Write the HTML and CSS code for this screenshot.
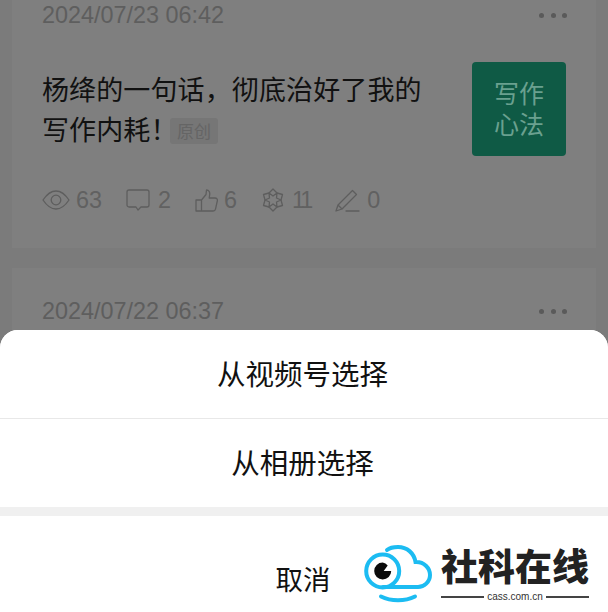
FILE: index.html
```html
<!DOCTYPE html>
<html lang="zh-CN">
<head>
<meta charset="utf-8">
<title>选择</title>
<link rel="stylesheet" href="styles.css">
</head>
<body>
<div class="page">
  <main class="feed">
    <article class="card">
      <header class="card-head">
        <time class="date">2024/07/23 06:42</time>
        <span class="dots"><i></i><i></i><i></i></span>
      </header>
      <div class="card-body">
        <h2 class="title">杨绛的一句话，彻底治好了我的写作内耗<span class="bang">！</span><span class="tag">原创</span></h2>
        <div class="thumb">写作<br>心法</div>
      </div>
      <div class="stats">
        <span class="stat">
          <svg class="icon icon-eye" viewBox="0 0 28 20"><path d="M1 10C5 4 9 1 14 1s9 3 13 9c-4 6-8 9-13 9S5 16 1 10Z"/><circle cx="14" cy="10" r="4.800"/></svg>
          <span>63</span>
        </span>
        <span class="stat">
          <svg class="icon icon-comment" viewBox="0 0 24 22"><path d="M3 1h18a2 2 0 0 1 2 2v13a2 2 0 0 1-2 2h-6l-3 3-2-3H3a2 2 0 0 1-2-2V3a2 2 0 0 1 2-2Z"/></svg>
          <span>2</span>
        </span>
        <span class="stat">
          <svg class="icon icon-like" viewBox="0 0 23 23"><path d="M1 11h5.500v11H1ZM6.500 11l4.500-5.500L11.500 1c2.500 0 3.500 2 3.200 4.500L14.200 9H20c1.800 0 2.700 1.400 2.300 3l-1.800 8.200c-.3 1.200-1.200 1.800-2.300 1.800H6.500"/></svg>
          <span>6</span>
        </span>
        <span class="stat">
          <svg class="icon icon-star" viewBox="0 0 24 24"><path d="M12 1 16 5 21.500 6.500 20 12 21.500 17.500 16 19 12 23 8 19 2.500 17.500 4 12 2.500 6.500 8 5Z"/><path d="M8 5 12 8 16 5 15.500 10 20 12 15.500 14 16 19 12 16 8 19 8.500 14 4 12 8.500 10Z"/></svg>
          <span class="tight">11</span>
        </span>
        <span class="stat">
          <svg class="icon icon-pen" viewBox="0 0 25 23"><path d="M1 22 3 16 17.500 1.500l4 4L7 20ZM3 16l4 4"/><path d="M11 22h13"/></svg>
          <span>0</span>
        </span>
      </div>
    </article>
    <article class="card">
      <header class="card-head">
        <time class="date">2024/07/22 06:37</time>
        <span class="dots"><i></i><i></i><i></i></span>
      </header>
    </article>
  </main>

  <section class="sheet">
    <button class="sheet-item">从视频号选择</button>
    <button class="sheet-item">从相册选择</button>
    <div class="sheet-gap"></div>
    <button class="sheet-cancel">取消</button>
  </section>

  <div class="logo">
    <svg class="logo-mark" viewBox="0 0 72 60">
      <path class="logo-line" d="M25 6C28 3.500 32 3 36 3c9 0 16 6 17.500 15C62 17.500 68 24 68 31c0 7-6 12-12 12H21"/>
      <circle class="logo-line" cx="20.700" cy="27" r="16.500"/>
      <path class="logo-pupil" d="M20.700 18.500a8.500 8.500 0 1 0 8.500 8.500h-7.500l4-5.500a8.500 8.500 0 0 0-5-3Z"/>
      <path class="logo-line" d="M19 52.500c10 5 24 5 34 0"/>
    </svg>
    <div class="logo-text">
      <div class="logo-name">社科在线</div>
      <div class="logo-url"><span>cass.com.cn</span></div>
    </div>
  </div>
</div>
</body>
</html>
```
FILE: styles.css
```css
* { box-sizing: border-box; }
html, body { margin: 0; padding: 0; }
body { font-family: "Liberation Sans", "Noto Sans CJK SC", sans-serif; background: #7b7b7b; }

.page { position: relative; width: 608px; height: 612px; overflow: hidden; background: #7b7b7b; }

.feed { display: flex; flex-direction: column; gap: 20px; padding: 0 12px; margin-top: -28px; }
.card { height: 276px; padding: 28px 30px 0; background: #7f7f7f; }

.card-head { display: flex; justify-content: space-between; align-items: center; height: 28px; padding-top: 2px; }
.date { font-size: 23.400px; color: #5e5e5e; }
.dots { display: flex; gap: 6.500px; margin-right: -1px; }
.dots i { display: block; width: 5px; height: 5px; border-radius: 50%; background: #5a5a5a; }

.card-body { display: flex; justify-content: space-between; align-items: center; margin-top: 34px; height: 94px; }
.title { width: 384px; margin: 0; font-size: 27px; line-height: 40px; letter-spacing: 0.12px; font-weight: 400; color: #111; font-family: "Noto Sans CJK SC", sans-serif; }
.bang { font-feature-settings: "palt"; }
.tag { display: inline-block; margin-left: 6px; padding: 0 7px; height: 26px; line-height: 26px; font-size: 17px; letter-spacing: 0; color: #656565; background: #767676; border-radius: 3px; vertical-align: 2px; }
.thumb { display: flex; align-items: center; justify-content: center; text-align: center; width: 94px; height: 94px; padding-bottom: 2px; border-radius: 4px; background: #0f5a45; color: #6aa08f; font-size: 25px; line-height: 31px; font-family: "Noto Sans CJK SC", sans-serif; }

.stats { display: flex; gap: 24px; height: 28px; margin-top: 30px; align-items: center; font-size: 23.400px; color: #616161; }
.stat { display: flex; align-items: center; gap: 6px; }
.tight { letter-spacing: -3px; margin-right: 1px; }
.icon { display: block; fill: none; stroke: #5e5e5e; stroke-width: 1.300; stroke-linejoin: round; stroke-linecap: round; }
.icon-eye { width: 28px; height: 20px; }
.icon-comment { width: 24px; height: 22px; margin-right: 2px; }
.icon-like { width: 23px; height: 23px; }
.icon-star { width: 24px; height: 26px; margin-right: 1px; }
.icon-pen { width: 25px; height: 23px; margin-right: 1px; }

.sheet { position: absolute; left: 0; right: 0; bottom: 0; height: 282px; display: flex; flex-direction: column; background: #fff; border-radius: 18px 18px 0 0; overflow: hidden; font-family: "Noto Sans CJK SC", sans-serif; }
.sheet-item { height: 88px; flex: none; border: 0; background: #fff; font: inherit; font-size: 28.500px; color: #111; padding: 0 3px 4px 0; }
.sheet-item + .sheet-item { border-top: 1px solid #e8e8e8; height: 89px; }
.sheet-gap { height: 9px; flex: none; background: #f0f0f0; }
.sheet-cancel { flex: 1; border: 0; background: #fff; font: inherit; font-size: 27.500px; color: #111; padding: 28px 2px 0 0; }

.logo { position: absolute; left: 362px; top: 544px; display: flex; gap: 7px; }
.logo-mark { width: 72px; height: 60px; flex: none; }
.logo-line { fill: none; stroke: #1cbcf2; stroke-width: 4; stroke-linecap: round; }
.logo-pupil { fill: #0b0b0b; }
.logo-text { width: 148px; }
.logo-name { font-family: "Noto Sans CJK SC", sans-serif; font-weight: 900; font-size: 37px; line-height: 48px; margin-top: -3px; color: #222; white-space: nowrap; }
.logo-url { display: flex; align-items: center; gap: 3px; font-size: 10px; line-height: 10px; color: #333; margin-top: 3px; }
.logo-url::before, .logo-url::after { content: ""; flex: 1; height: 2px; background: #444; }
```
